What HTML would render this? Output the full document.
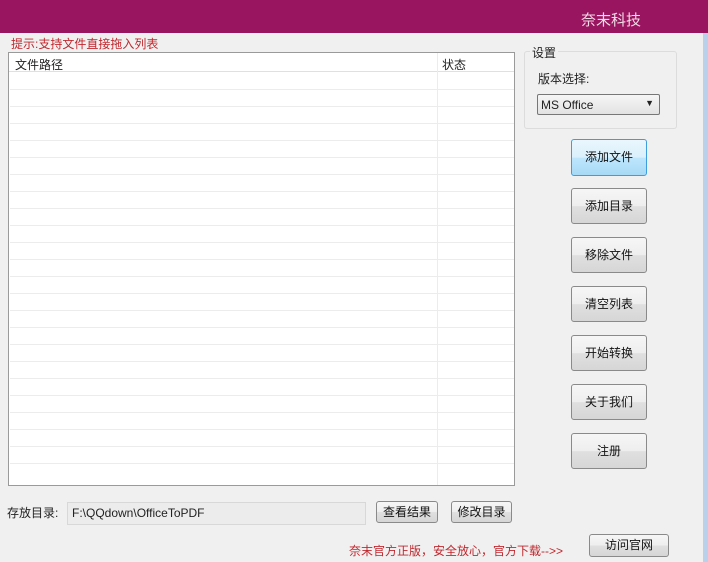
<!DOCTYPE html>
<html><head><meta charset="utf-8"><style>
*{box-sizing:border-box;margin:0;padding:0}
body{width:708px;height:562px;background:#f0f0f0;font-family:"Liberation Sans","Noto Sans CJK SC",sans-serif;font-size:12px;color:#222;position:relative;overflow:hidden}
.abs{position:absolute}
.hdr{left:0;top:0;width:708px;height:33px;background:#9a1560}
.btn{position:absolute;border:1px solid #8a8a8a;border-radius:3px;background:linear-gradient(#f6f6f6,#eeeeee 50%,#e0e0e0 51%,#d6d6d6);text-align:center;font-size:12px;color:#111}
.row{position:absolute;left:1px;width:504px;height:1px;background:#ececec}
</style></head><body>
<div class="abs hdr"></div>
<div class="abs" style="left:581px;top:9px;color:#f2dbe6;font-size:15px">奈末科技</div>
<div class="abs" style="right:0;top:33px;width:5px;height:529px;background:#b9d1ea"></div>
<div class="abs" style="left:11px;top:35px;color:#c0282e;font-size:12px">提示:支持文件直接拖入列表</div>
<div class="abs" style="left:8px;top:52px;width:507px;height:434px;background:#fff;border:1px solid #9a9a9a">
<div class="abs" style="left:0;top:0;width:505px;height:19px;border-bottom:1px solid #e0e0e0"></div>
<div class="abs" style="left:6px;top:3px">文件路径</div>
<div class="abs" style="left:433px;top:3px">状态</div>
<div class="abs" style="left:428px;top:0;width:1px;height:432px;background:#ececec"></div>
<div class="row" style="top:36px"></div><div class="row" style="top:53px"></div><div class="row" style="top:70px"></div><div class="row" style="top:87px"></div><div class="row" style="top:104px"></div><div class="row" style="top:121px"></div><div class="row" style="top:138px"></div><div class="row" style="top:155px"></div><div class="row" style="top:172px"></div><div class="row" style="top:189px"></div><div class="row" style="top:206px"></div><div class="row" style="top:223px"></div><div class="row" style="top:240px"></div><div class="row" style="top:257px"></div><div class="row" style="top:274px"></div><div class="row" style="top:291px"></div><div class="row" style="top:308px"></div><div class="row" style="top:325px"></div><div class="row" style="top:342px"></div><div class="row" style="top:359px"></div><div class="row" style="top:376px"></div><div class="row" style="top:393px"></div><div class="row" style="top:410px"></div>
</div>
<div class="abs" style="left:524px;top:51px;width:153px;height:78px;border:1px solid #dcdcdc;border-radius:3px"></div>
<div class="abs" style="left:530px;top:44px;background:#f0f0f0;padding:0 2px">设置</div>
<div class="abs" style="left:538px;top:70px">版本选择:</div>
<div class="abs" style="left:537px;top:94px;width:123px;height:21px;border:1px solid #777;border-radius:2px;background:linear-gradient(#f6f6f6,#e2e2e2)"><span class="abs" style="left:3px;top:3px">MS Office</span><span class="abs" style="right:5px;top:3px;font-size:9px">▼</span></div>
<div class="btn" style="left:571px;top:139px;width:76px;height:37px;line-height:35px;border-color:#3c9ee0;background:linear-gradient(#eaf6fd,#d9f0fc 50%,#bee6fd 51%,#a7d9f5)">添加文件</div>
<div class="btn" style="left:571px;top:188px;width:76px;height:36px;line-height:34px">添加目录</div>
<div class="btn" style="left:571px;top:237px;width:76px;height:36px;line-height:34px">移除文件</div>
<div class="btn" style="left:571px;top:286px;width:76px;height:36px;line-height:34px">清空列表</div>
<div class="btn" style="left:571px;top:335px;width:76px;height:36px;line-height:34px">开始转换</div>
<div class="btn" style="left:571px;top:384px;width:76px;height:36px;line-height:34px">关于我们</div>
<div class="btn" style="left:571px;top:433px;width:76px;height:36px;line-height:34px">注册</div>
<div class="abs" style="left:7px;top:504px">存放目录:</div>
<div class="abs" style="left:67px;top:502px;width:299px;height:23px;border:1px solid #d8d8d8;background:#ececec;padding:3px 4px">F:\QQdown\OfficeToPDF</div>
<div class="btn" style="left:376px;top:501px;width:62px;height:22px;line-height:20px">查看结果</div>
<div class="btn" style="left:451px;top:501px;width:61px;height:22px;line-height:20px">修改目录</div>
<div class="abs" style="left:349px;top:542px;color:#c0282e">奈末官方正版，安全放心，官方下载-->></div>
<div class="btn" style="left:589px;top:534px;width:80px;height:23px;line-height:21px">访问官网</div>
</body></html>
